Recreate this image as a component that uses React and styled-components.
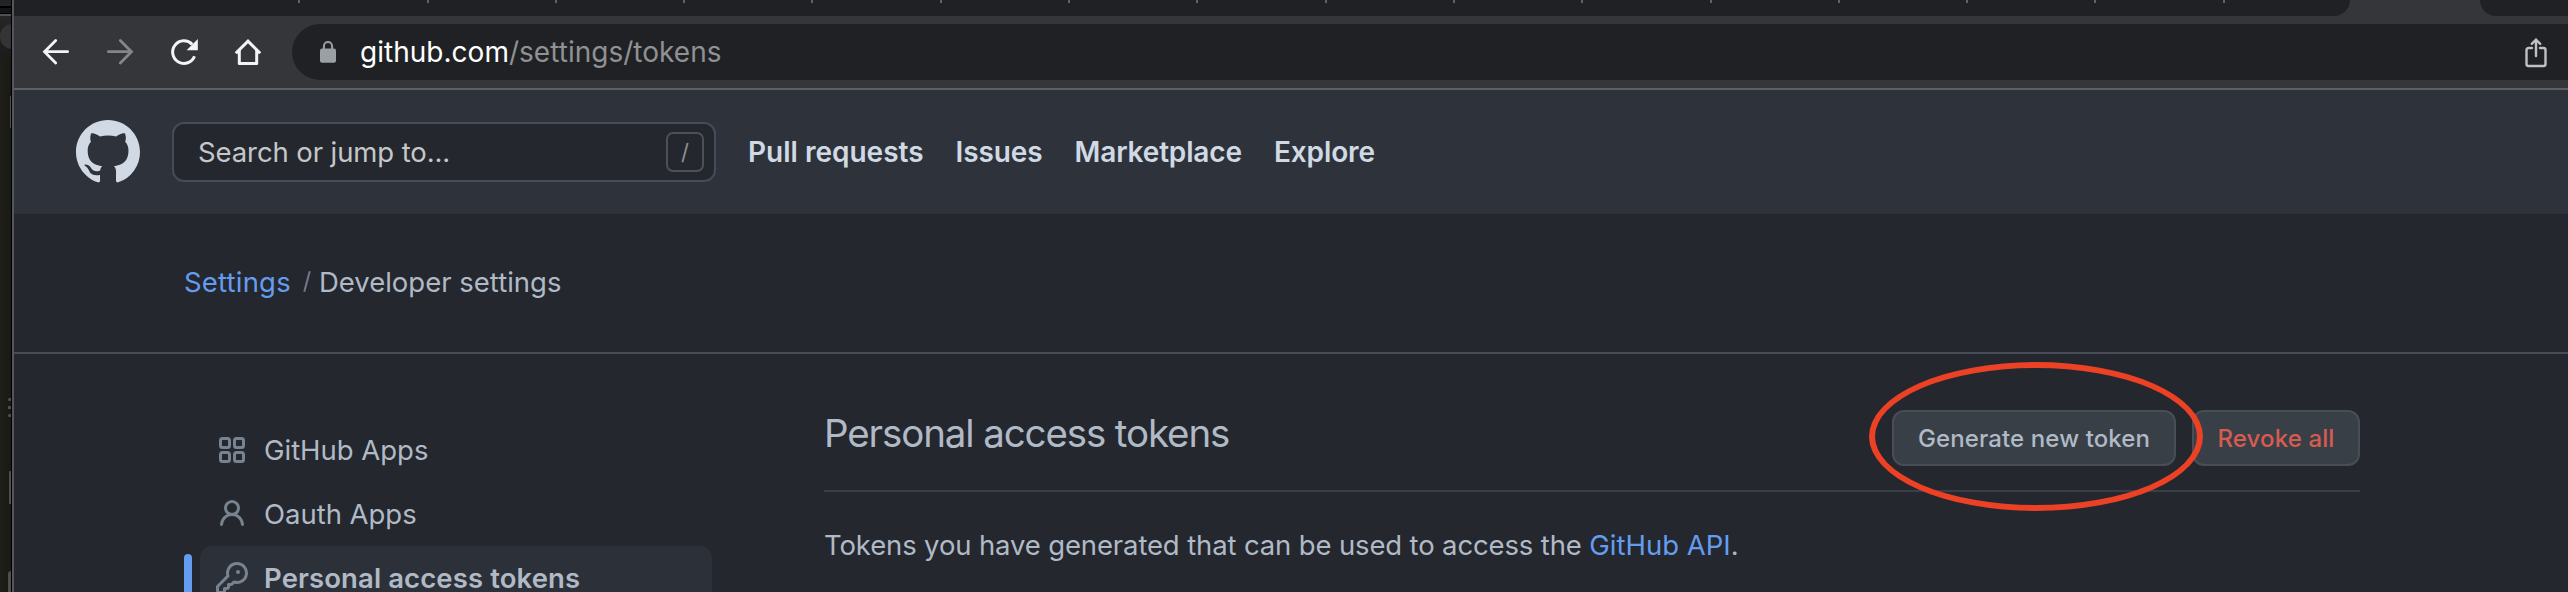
import React from "react";
import styled, { createGlobalStyle } from "styled-components";

const GlobalStyle = createGlobalStyle`
  *, *::before, *::after { box-sizing: border-box; }
  body {
    margin: 0;
    overflow: hidden;
    background: #1d1e18;
    font-family: Inter, "Liberation Sans", sans-serif;
    font-size: 27.5px;
    letter-spacing: -0.1px;
    color: #b0bac6;
  }
`;

const Desktop = styled.div`
  display: flex;
  width: 2568px;
  height: 592px;
  overflow: hidden;
`;

/* Sliver of the window lying behind the browser */
const BackWindow = styled.div`
  position: relative;
  flex: none;
  width: 12px;
  border-right: 1px solid #000;
  background: linear-gradient(90deg, #1e1f18, #191a14);
  overflow: hidden;
`;
const BackTabs = styled.div`
  height: 14px;
  background: linear-gradient(#222427 0 6px, #000 6px 8px, #141516 8px 13px, #000 13px);
`;
const BackToolbar = styled.div`
  height: 44px;
  padding-top: 8px;
  border-top: 2px solid #505152;
  background: linear-gradient(#262627, #1b1b1b);
`;
const BackPill = styled.div`
  width: 24px;
  height: 25px;
  border-radius: 12px;
  background: #343434;
`;
const Fragment = styled.i`
  position: absolute;
  right: 0;
  top: ${(p) => p.$top}px;
  width: ${(p) => p.$w}px;
  height: ${(p) => p.$h}px;
  border-radius: ${(p) => p.$r || 0}px 0 0 ${(p) => p.$r || 0}px;
  background: #505049;
`;

const Browser = styled.div`
  flex: 1;
  min-width: 0;
  display: flex;
  flex-direction: column;
  border-left: 2px solid #55565b;
  background: #24272e;
`;

const TabStrip = styled.div`
  flex: none;
  display: flex;
  height: 16px;
  background: #35363a;
`;
const InactiveTabs = styled.div`
  display: flex;
  width: 2336px;
  padding-left: 158px;
  border-bottom-right-radius: 16px;
  background: #202124;
`;
const Tab = styled.div`
  flex: none;
  width: 128.3px;
  height: 3px;
  border-right: 2px solid #606266;
`;
const TrailingTabs = styled.div`
  margin-left: auto;
  width: 88px;
  border-bottom-left-radius: 16px;
  background: #202124;
`;

const Toolbar = styled.div`
  flex: none;
  display: flex;
  align-items: center;
  height: 74px;
  padding-left: 26px;
  border-bottom: 2px solid #5f6063;
  background: #35363a;
`;
const ToolButton = styled.div`
  display: flex;
  justify-content: center;
  width: 32px;
  margin-right: 32px;
  color: ${(p) => (p.$dim ? "#858688" : "#f3f4f6")};
`;
const AddressBar = styled.div`
  flex: 1;
  display: flex;
  align-items: center;
  height: 56px;
  margin-left: -4px;
  padding: 0 19px 0 28px;
  border-radius: 28px 0 0 28px;
  background: #202124;
`;
const Url = styled.div`
  flex: 1;
  margin-left: 24px;
  font-size: 28px;
  letter-spacing: 0.02px;
  color: #8f9193;
`;
const Domain = styled.span`
  color: #fff;
`;

const Header = styled.header`
  flex: none;
  display: flex;
  align-items: center;
  height: 124px;
  padding-left: 62px;
  gap: 32px;
  background: #2e333b;
`;
const Search = styled.div`
  display: flex;
  align-items: center;
  justify-content: space-between;
  width: 544px;
  height: 60px;
  padding: 0 10px 0 24px;
  border: 2px solid #454c57;
  border-radius: 12px;
  background: #24272e;
  color: #c5c7c9;
`;
const SlashKey = styled.div`
  display: flex;
  align-items: center;
  justify-content: center;
  width: 38px;
  height: 40px;
  border: 2px solid #4c5057;
  border-radius: 7px;
  font-size: 22px;
  color: #8e9093;
`;
const NavLink = styled.a`
  font-size: 28px;
  font-weight: 600;
  letter-spacing: ${(p) => p.$track || 0}px;
  color: #d0d9e4;
`;

const Breadcrumb = styled.div`
  flex: none;
  display: flex;
  align-items: center;
  height: 140px;
  padding-left: 170px;
  padding-bottom: 2px;
  border-bottom: 2px solid #474c57;
  letter-spacing: 0;
`;
const Separator = styled.span`
  width: 2px;
  height: 21px;
  margin: 0 11px 1px 15px;
  background: #707a86;
  transform: rotate(15deg);
`;
const Link = styled.a`
  color: #649df0;
  letter-spacing: ${(p) => p.$track || 0}px;
`;

const Body = styled.div`
  display: flex;
  gap: 112px;
  padding-left: 170px;
`;
const SideNav = styled.nav`
  width: 528px;
  padding-top: 64px;
`;
const NavRow = styled.div`
  display: flex;
  height: 64px;
`;
const Marker = styled.div`
  width: 8px;
  height: 48px;
  margin: 8px 8px 0 0;
  border-radius: 4px;
  background: ${(p) => (p.$on ? "#649df0" : "transparent")};
`;
const NavItem = styled.div`
  flex: 1;
  display: flex;
  align-items: center;
  gap: 16px;
  padding-left: 16px;
  border-radius: 12px;
  background: ${(p) => (p.$on ? "#2c3038" : "transparent")};
  font-weight: ${(p) => (p.$on ? 600 : 400)};
  letter-spacing: ${(p) => (p.$on ? 0.1 : -0.02)}px;

  svg { color: #788390; }
`;

const Main = styled.main`
  width: 1536px;
  padding-top: 56px;
`;
const PageHead = styled.div`
  display: flex;
  align-items: flex-start;
  gap: 16px;
  padding-bottom: 24px;
  border-bottom: 2px solid #393e47;
`;
const Title = styled.h2`
  flex: 1;
  margin: 0;
  font-size: 38.5px;
  font-weight: 400;
  line-height: 46px;
  letter-spacing: -1.12px;
`;
const Button = styled.button`
  height: 56px;
  width: ${(p) => p.$width}px;
  padding: 0;
  border: 2px solid #484d56;
  border-radius: 12px;
  background: #393f46;
  font: 500 24px Inter, "Liberation Sans", sans-serif;
  letter-spacing: 0.12px;
  color: ${(p) => (p.$danger ? "#d65c51" : "#b0bac6")};
`;
const ButtonWrap = styled.div`
  position: relative;
  display: flex;
`;
const Ring = styled.div`
  position: absolute;
  z-index: 1;
  left: -23px;
  top: -48px;
  width: 334px;
  height: 149px;
  border: 6px solid #ec4124;
  border-radius: 50%;
`;
const Note = styled.p`
  margin: 32px 0 0;
  line-height: 42px;
  letter-spacing: -0.14px;
`;

const Icon = ({ size = 32, box = 16, children, ...rest }) => (
  <svg width={size} height={size} viewBox={`0 0 ${box} ${box}`} fill="currentColor" {...rest}>
    {children}
  </svg>
);
const lineProps = { fill: "none", stroke: "currentColor" };

const BackIcon = () => (
  <Icon box={32} {...lineProps} strokeWidth="2.8">
    <path d="M27.6 15.7H4.5M15.7 4.5 4.5 15.7 15.7 27" strokeLinecap="round" />
  </Icon>
);
const ForwardIcon = () => (
  <Icon box={32} {...lineProps} strokeWidth="2.8">
    <path d="M4.4 15.7h23.1M16.3 4.5 27.5 15.7 16.3 27" strokeLinecap="round" />
  </Icon>
);
const ReloadIcon = () => (
  <Icon box={32}>
    <path d="M26.5 20.2A11.3 11.3 0 1 1 24.2 8.4" fill="none" stroke="currentColor" strokeWidth="3" />
    <path d="M29.8 3v11.2H18.6z" />
  </Icon>
);
const HomeIcon = () => (
  <Icon box={32} {...lineProps} strokeWidth="3">
    <path d="M3.8 17.3 16 5.2l12.2 12.1" />
    <path d="M7.3 14v13.4h17.4V14" strokeLinejoin="round" />
  </Icon>
);
const LockIcon = () => (
  <svg width="16" height="22" viewBox="0 0 16 22" fill="#9aa0a4">
    <rect y="7.5" width="16" height="14.2" rx="2" />
    <path d="M3.9 8V5.2a4.1 4.1 0 0 1 8.2 0V8" fill="none" stroke="#9aa0a4" strokeWidth="2" />
  </svg>
);
const ShareIcon = () => (
  <svg width="26" height="32" viewBox="0 0 26 32" fill="none" stroke="#bfc0c1" strokeWidth="2.4">
    <path d="M9 12H5.5a2 2 0 0 0-2 2v14a2 2 0 0 0 2 2h15a2 2 0 0 0 2-2V14a2 2 0 0 0-2-2H17" strokeLinecap="round" />
    <path d="M13 20V4M8.8 7.8 13 3.6l4.2 4.2" strokeLinecap="round" />
  </svg>
);
const GitHubMark = () => (
  <Icon size={64} color="#d0d9e4">
    <path d="M8 0C3.58 0 0 3.58 0 8c0 3.54 2.29 6.53 5.47 7.59.4.07.55-.17.55-.38 0-.19-.01-.82-.01-1.49-2.01.37-2.53-.49-2.69-.94-.09-.23-.48-.94-.82-1.13-.28-.15-.68-.52-.01-.53.63-.01 1.08.58 1.23.82.72 1.21 1.87.87 2.33.66.07-.52.28-.87.51-1.07-1.78-.2-3.64-.89-3.64-3.95 0-.87.31-1.59.82-2.15-.08-.2-.36-1.02.08-2.12 0 0 .67-.21 2.2.82.64-.18 1.32-.27 2-.27s1.36.09 2 .27c1.53-1.04 2.2-.82 2.2-.82.44 1.1.16 1.92.08 2.12.51.56.82 1.27.82 2.15 0 3.07-1.87 3.75-3.65 3.95.29.25.54.73.54 1.48 0 1.07-.01 1.93-.01 2.2 0 .21.15.46.55.38A8.01 8.01 0 0 0 16 8c0-4.42-3.58-8-8-8z" />
  </Icon>
);
const AppsIcon = () => (
  <Icon {...lineProps} strokeWidth="1.5">
    {[[2.25, 2.25], [9.25, 2.25], [2.25, 9.25], [9.25, 9.25]].map(([x, y]) => (
      <rect key={`${x}-${y}`} x={x} y={y} width="4.5" height="4.5" rx="1" />
    ))}
  </Icon>
);
const PersonIcon = () => (
  <Icon>
    <path fillRule="evenodd" d="M10.5 5a2.5 2.5 0 11-5 0 2.5 2.5 0 015 0zm.061 3.073a4 4 0 10-5.123 0 6.004 6.004 0 00-3.431 5.142.75.75 0 001.498.07 4.5 4.5 0 018.99 0 .75.75 0 101.498-.07 6.005 6.005 0 00-3.432-5.142z" />
  </Icon>
);
const KeyIcon = () => (
  <Icon>
    <path fillRule="evenodd" d="M6.5 5.5a4 4 0 112.731 3.795.75.75 0 00-.768.18L7.44 10.5H6.25a.75.75 0 00-.75.75v1.19l-.06.06H4.25a.75.75 0 00-.75.75v1.19l-.06.06H1.75a.25.25 0 01-.25-.25v-1.69l5.024-5.023a.75.75 0 00.181-.768A3.995 3.995 0 016.5 5.5zm4-5.5a5.5 5.5 0 00-5.348 6.788L.22 11.72a.75.75 0 00-.22.53v2C0 15.216.784 16 1.75 16h2a.75.75 0 00.53-.22l.5-.5a.75.75 0 00.22-.53V14h.75a.75.75 0 00.53-.22l.5-.5a.75.75 0 00.22-.53V12h.75a.75.75 0 00.53-.22l.932-.932A5.5 5.5 0 1010.5 0zm.5 6a1 1 0 100-2 1 1 0 000 2z" />
  </Icon>
);

const MENU = [
  { label: "GitHub Apps", icon: AppsIcon },
  { label: "Oauth Apps", icon: PersonIcon },
  { label: "Personal access tokens", icon: KeyIcon, on: true },
];

export default function App() {
  return (
    <Desktop>
      <GlobalStyle />
      <BackWindow>
        <BackTabs />
        <BackToolbar>
          <BackPill />
        </BackToolbar>
        <Fragment $top={96} $w={1} $h={32} />
        <Fragment $top={398} $w={3} $h={3} $r={2} />
        <Fragment $top={406} $w={3} $h={3} />
        <Fragment $top={414} $w={3} $h={3} $r={2} />
        <Fragment $top={471} $w={2} $h={33} $r={1} />
        <Fragment $top={571} $w={3} $h={30} $r={3} />
      </BackWindow>
      <Browser>
        <TabStrip>
          <InactiveTabs>
            {Array.from({ length: 16 }, (_, i) => (
              <Tab key={i} />
            ))}
          </InactiveTabs>
          <TrailingTabs />
        </TabStrip>
        <Toolbar>
          <ToolButton><BackIcon /></ToolButton>
          <ToolButton $dim><ForwardIcon /></ToolButton>
          <ToolButton><ReloadIcon /></ToolButton>
          <ToolButton><HomeIcon /></ToolButton>
          <AddressBar>
            <LockIcon />
            <Url>
              <Domain>github.com</Domain>/settings/tokens
            </Url>
            <ShareIcon />
          </AddressBar>
        </Toolbar>
        <Header>
          <GitHubMark />
          <Search>
            Search or jump to...
            <SlashKey>/</SlashKey>
          </Search>
          <NavLink>Pull requests</NavLink>
          <NavLink $track={-0.1}>Issues</NavLink>
          <NavLink $track={-0.15}>Marketplace</NavLink>
          <NavLink $track={-0.1}>Explore</NavLink>
        </Header>
        <Breadcrumb>
          <Link $track={0.2}>Settings</Link>
          <Separator />
          Developer settings
        </Breadcrumb>
        <Body>
          <SideNav>
            {MENU.map(({ label, icon: Glyph, on }) => (
              <NavRow key={label}>
                <Marker $on={on} />
                <NavItem $on={on}>
                  <Glyph />
                  {label}
                </NavItem>
              </NavRow>
            ))}
          </SideNav>
          <Main>
            <PageHead>
              <Title>Personal access tokens</Title>
              <ButtonWrap>
                <Button $width={284}>Generate new token</Button>
                <Ring />
              </ButtonWrap>
              <Button $width={168} $danger>Revoke all</Button>
            </PageHead>
            <Note>
              Tokens you have generated that can be used to access the <Link>GitHub API</Link>.
            </Note>
          </Main>
        </Body>
      </Browser>
    </Desktop>
  );
}
